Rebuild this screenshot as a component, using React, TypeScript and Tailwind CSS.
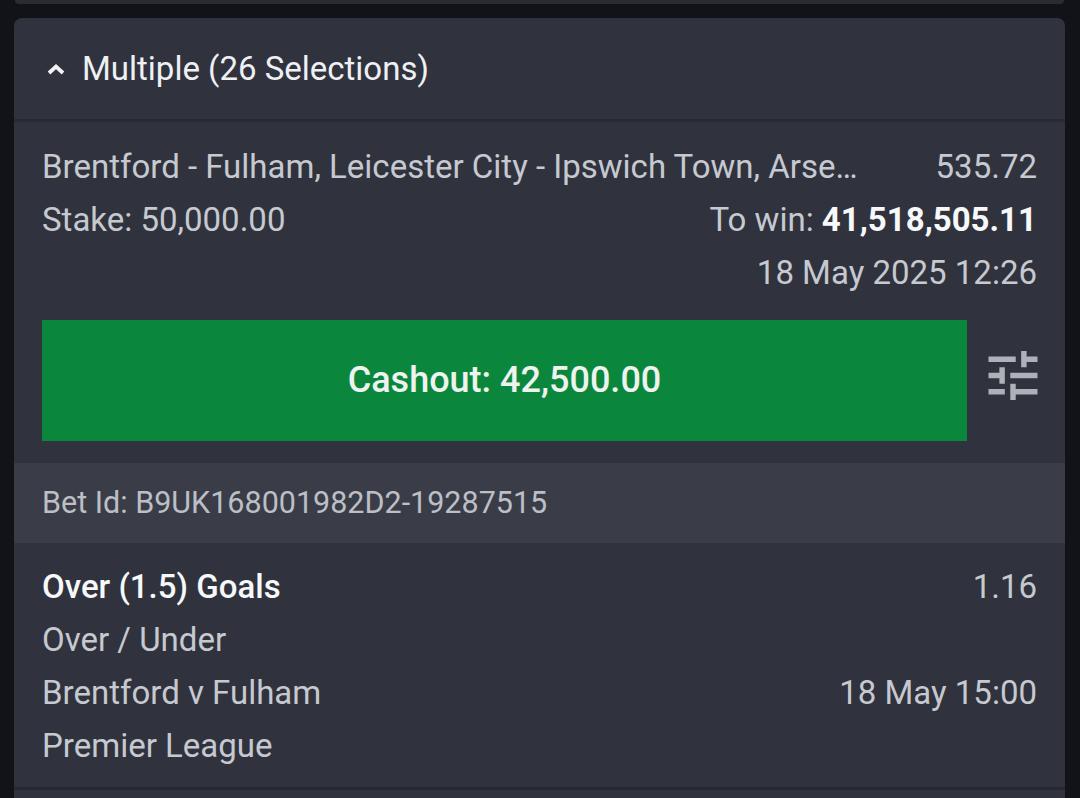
import React from "react";

function Chevron() {
  return (
    <svg width="18" height="12" viewBox="0 0 18 12" className="shrink-0">
      <polyline points="2,10 9,3.5 16,10" fill="none" stroke="#f1f2f5" strokeWidth="3.8" strokeLinecap="butt" strokeLinejoin="miter" />
    </svg>
  );
}

function Tune() {
  return (
    <svg width="50" height="49" viewBox="3 3 18 18" className="shrink-0" fill="#aeb1b8">
      <path d="M3 17v2h6v-2H3zM3 5v2h10V5H3zm10 16v-2h8v-2h-8v-2h-2v6h2zM7 9v2H3v2h4v2h2V9H7zm14 4v-2H11v2h10zm-6-4h2V7h4V5h-4V3h-2v6z" />
    </svg>
  );
}

export default function App() {
  return (
    <div
      className="min-h-[798px] h-[798px] overflow-hidden bg-[#121318] pl-[14px] pr-[15px]"
      style={{ fontFamily: "Roboto, 'Noto Sans', sans-serif" }}
    >
      <div className="mx-[1px] h-[4px] rounded-b-lg bg-[#2a2c34]" />
      <div className="mt-[14px] rounded-t-lg bg-[#30333d]">
        <div className="flex h-[104px] items-center gap-[17px] pl-[33px] border-b-[3px] border-[#282a32]">
          <Chevron />
          <span className="text-[33px] leading-none text-[#eef0f3]">Multiple (26 Selections)</span>
        </div>

        <div className="px-[28px] pt-[18px] text-[33px] leading-[53px] text-[#c6c9d0]">
          <div className="flex justify-between gap-[70px]">
            <span className="min-w-0 flex-1 truncate">Brentford - Fulham, Leicester City - Ipswich Town, Arse…</span>
            <span className="shrink-0">535.72</span>
          </div>
          <div className="flex justify-between">
            <span>Stake: 50,000.00</span>
            <span>
              To win: <span className="font-bold text-[#f7f8fa]">41,518,505.11</span>
            </span>
          </div>
          <div className="flex justify-end">
            <span>18 May 2025 12:26</span>
          </div>

          <div className="mt-[21px] flex items-start">
            <div className="flex h-[121px] w-[925px] shrink-0 items-center justify-center bg-[#0b873d] text-[36px] font-medium text-[#eef3ef]">
              Cashout: 42,500.00
            </div>
            <div className="ml-[21px] mt-[31px]">
              <Tune />
            </div>
          </div>
        </div>

        <div className="mt-[22px] flex h-[80px] items-center bg-[#3a3d47] pl-[28px] text-[30.5px] text-[#bcbfc6]">
          Bet Id: B9UK168001982D2-19287515
        </div>

        <div className="border-b-[3px] border-[#272930] px-[28px] pt-[17px] pb-[15px] text-[33px] leading-[53px] text-[#c6c9d0]">
          <div className="flex justify-between">
            <span className="font-medium text-[#f7f8fa]">Over (1.5) Goals</span>
            <span>1.16</span>
          </div>
          <div>Over / Under</div>
          <div className="flex justify-between">
            <span>Brentford v Fulham</span>
            <span>18 May 15:00</span>
          </div>
          <div>Premier League</div>
        </div>
        <div className="h-[20px]" />
      </div>
    </div>
  );
}
